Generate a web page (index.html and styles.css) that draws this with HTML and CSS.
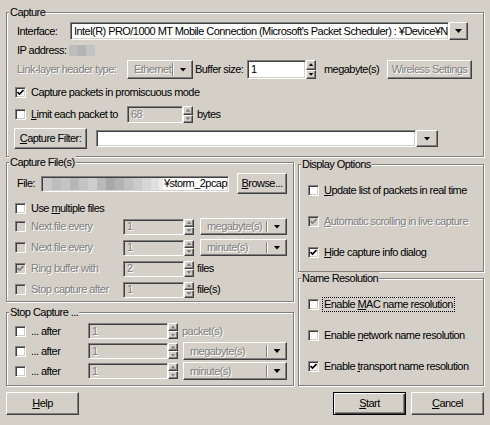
FILE: index.html
```html
<!DOCTYPE html>
<html>
<head>
<meta charset="utf-8">
<title>Capture Options</title>
<link rel="stylesheet" href="styles.css">
</head>
<body>
<div class="dialog">

  <div class="group g-capture">
    <span class="gtitle">Capture</span>
    <div class="row r-iface">
      <span class="lbl w-iface">Interface:</span>
      <div class="combo c-iface">
        <div class="field">Intel(R) PRO/1000 MT Mobile Connection (Microsoft's Packet Scheduler) : ¥Device¥NPF_{8E7B1F2A-5C3D-4A6B-9E1F-0D2C3B4A5E6F}</div>
        <div class="dbtn"><i class="arr"></i></div>
      </div>
    </div>
    <div class="row r-ip">
      <span class="lbl w-ip">IP address:</span><span class="ip-mosaic"></span>
    </div>
    <div class="row r-link">
      <span class="lbl dis w-link">Link-layer header type:</span>
      <div class="optmenu om-eth"><span class="omtext dis">Ethernet</span><span class="omsep"></span><span class="omarr"><i class="arr"></i></span></div>
      <span class="lbl w-buf">Buffer size:</span>
      <div class="spin sp-buf"><div class="field">1</div><div class="spbtns"><span class="spb"><i class="sarr up"></i></span><span class="spb"><i class="sarr dn"></i></span></div></div>
      <span class="lbl w-mb">megabyte(s)</span>
      <button class="btn b-wireless"><span class="dis">Wireless Settings</span></button>
    </div>
    <div class="row r-prom">
      <span class="cb"><svg viewBox="0 0 7 7"><path d="M0.5 3 L2.5 5 L6.5 1"/></svg></span><span class="lbl">Capture packets in promiscuous mode</span>
    </div>
    <div class="row r-limit">
      <span class="chk w-limit"><span class="cb"></span><span class="lbl"><u>L</u>imit each packet to</span></span>
      <div class="spin sp-limit"><div class="field dis">68</div><div class="spbtns dis"><span class="spb"><i class="sarr up"></i></span><span class="spb"><i class="sarr dn"></i></span></div></div>
      <span class="lbl u-bytes">bytes</span>
    </div>
    <div class="row r-filter">
      <button class="btn b-filter"><span><u>C</u>apture Filter:</span></button>
      <div class="combo c-filter">
        <div class="field"></div>
        <div class="dbtn"><i class="arr"></i></div>
      </div>
    </div>
  </div>

  <div class="mid">
    <div class="col">
      <div class="group g-files">
        <span class="gtitle">Capture File(s)</span>
        <div class="row r-file">
          <span class="lbl w-file">File:</span>
          <div class="field f-file"><span class="path-mosaic"></span><span class="path">¥storm_2pcap</span></div>
          <button class="btn b-browse"><span><u>B</u>rowse...</span></button>
        </div>
        <div class="row r-multi">
          <span class="cb"></span><span class="lbl">Use <u>m</u>ultiple files</span>
        </div>
        <div class="row r-opt">
          <span class="chk w-fchk"><span class="cb dis"></span><span class="lbl dis">Next file every</span></span>
          <div class="spin sp-f"><div class="field dis">1</div><div class="spbtns dis"><span class="spb"><i class="sarr up"></i></span><span class="spb"><i class="sarr dn"></i></span></div></div>
          <div class="optmenu om-f"><span class="omtext dis">megabyte(s)</span><span class="omsep"></span><span class="omarr"><i class="arr"></i></span></div>
        </div>
        <div class="row r-opt">
          <span class="chk w-fchk"><span class="cb dis"></span><span class="lbl dis">Next file every</span></span>
          <div class="spin sp-f"><div class="field dis">1</div><div class="spbtns dis"><span class="spb"><i class="sarr up"></i></span><span class="spb"><i class="sarr dn"></i></span></div></div>
          <div class="optmenu om-f"><span class="omtext dis">minute(s)</span><span class="omsep"></span><span class="omarr"><i class="arr"></i></span></div>
        </div>
        <div class="row r-opt">
          <span class="chk w-fchk"><span class="cb dis"><svg viewBox="0 0 7 7"><path d="M0.5 3 L2.5 5 L6.5 1"/></svg></span><span class="lbl dis">Ring buffer with</span></span>
          <div class="spin sp-f"><div class="field dis">2</div><div class="spbtns dis"><span class="spb"><i class="sarr up"></i></span><span class="spb"><i class="sarr dn"></i></span></div></div>
          <span class="lbl u-files">files</span>
        </div>
        <div class="row r-opt">
          <span class="chk w-fchk"><span class="cb dis"></span><span class="lbl dis">Stop capture after</span></span>
          <div class="spin sp-f"><div class="field dis">1</div><div class="spbtns dis"><span class="spb"><i class="sarr up"></i></span><span class="spb"><i class="sarr dn"></i></span></div></div>
          <span class="lbl u-files">file(s)</span>
        </div>
      </div>

      <div class="group g-stop">
        <span class="gtitle">Stop Capture ...</span>
        <div class="row r-stop">
          <span class="chk w-schk"><span class="cb"></span><span class="lbl">... after</span></span>
          <div class="spin sp-s"><div class="field dis">1</div><div class="spbtns dis"><span class="spb"><i class="sarr up"></i></span><span class="spb"><i class="sarr dn"></i></span></div></div>
          <span class="lbl dis u-pkt">packet(s)</span>
        </div>
        <div class="row r-stop">
          <span class="chk w-schk"><span class="cb"></span><span class="lbl">... after</span></span>
          <div class="spin sp-s"><div class="field dis">1</div><div class="spbtns dis"><span class="spb"><i class="sarr up"></i></span><span class="spb"><i class="sarr dn"></i></span></div></div>
          <div class="optmenu om-s"><span class="omtext dis">megabyte(s)</span><span class="omsep"></span><span class="omarr"><i class="arr"></i></span></div>
        </div>
        <div class="row r-stop">
          <span class="chk w-schk"><span class="cb"></span><span class="lbl">... after</span></span>
          <div class="spin sp-s"><div class="field dis">1</div><div class="spbtns dis"><span class="spb"><i class="sarr up"></i></span><span class="spb"><i class="sarr dn"></i></span></div></div>
          <div class="optmenu om-s"><span class="omtext dis">minute(s)</span><span class="omsep"></span><span class="omarr"><i class="arr"></i></span></div>
        </div>
      </div>
    </div>

    <div class="col">
      <div class="group g-disp">
        <span class="gtitle">Display Options</span>
        <div class="row r-chk">
          <span class="cb"></span><span class="lbl"><u>U</u>pdate list of packets in real time</span>
        </div>
        <div class="row r-chk">
          <span class="cb dis"><svg viewBox="0 0 7 7"><path d="M0.5 3 L2.5 5 L6.5 1"/></svg></span><span class="lbl dis"><u>A</u>utomatic scrolling in live capture</span>
        </div>
        <div class="row r-chk">
          <span class="cb"><svg viewBox="0 0 7 7"><path d="M0.5 3 L2.5 5 L6.5 1"/></svg></span><span class="lbl"><u>H</u>ide capture info dialog</span>
        </div>
      </div>

      <div class="group g-name">
        <span class="gtitle">Name Resolution</span>
        <div class="row r-chk">
          <span class="cb"></span><span class="lbl focus">Enable <u>M</u>AC name resolution</span>
        </div>
        <div class="row r-chk">
          <span class="cb"></span><span class="lbl">Enable <u>n</u>etwork name resolution</span>
        </div>
        <div class="row r-chk">
          <span class="cb"><svg viewBox="0 0 7 7"><path d="M0.5 3 L2.5 5 L6.5 1"/></svg></span><span class="lbl">Enable <u>t</u>ransport name resolution</span>
        </div>
      </div>
    </div>
  </div>

  <div class="r-btns">
    <button class="btn b-dlg"><span><u>H</u>elp</span></button>
    <button class="btn b-dlg b-start default"><span><u>S</u>tart</span></button>
    <button class="btn b-dlg b-cancel"><span><u>C</u>ancel</span></button>
  </div>

</div>
</body>
</html>
```

FILE: styles.css
```css
* { box-sizing: border-box; }
html, body { margin: 0; padding: 0; }
body {
  width: 490px;
  height: 425px;
  overflow: hidden;
  background: #d4d0c8;
  font-family: "Liberation Sans", Arial, sans-serif;
  font-size: 11px;
  letter-spacing: -0.55px;
  line-height: 13px;
  color: #000;
}
u { text-decoration: underline; }

.dialog { padding: 12px 6px 0 6px; width: 490px; }

/* group boxes */
.group {
  position: relative;
  border: 1px solid #808080;
  box-shadow: inset 1px 1px 0 #fff, 1px 1px 0 #fff;
}
.gtitle {
  position: absolute;
  top: -7px;
  left: 2px;
  padding: 0 1px;
  line-height: 12px;
  background: #d4d0c8;
  white-space: nowrap;
}

.row { display: flex; align-items: center; }
.lbl { white-space: nowrap; flex: none; }
.dis { color: #808080; text-shadow: 1px 1px 0 #fff; }

/* sunken field */
.field {
  background: #fff;
  border: 1px solid;
  border-color: #808080 #fff #fff #808080;
  box-shadow: inset 1px 1px 0 #404040, inset -1px -1px 0 #d4d0c8;
  padding: 0 2px 0 3px;
  display: flex;
  align-items: center;
  white-space: nowrap;
  overflow: hidden;
  height: 100%;
}
.field.dis { background: #d4d0c8; }

/* raised */
.btn, .dbtn, .optmenu, .spb {
  background: #d4d0c8;
  border: 1px solid;
  border-color: #fff #404040 #404040 #fff;
  box-shadow: inset -1px -1px 0 #808080;
}
.btn {
  font: inherit;
  letter-spacing: inherit;
  color: #000;
  margin: 0;
  padding: 0;
  display: flex;
  align-items: center;
  justify-content: center;
  white-space: nowrap;
  flex: none;
}
.btn.default {
  border: 1px solid #000;
  box-shadow: inset 1px 1px 0 #fff, inset -1px -1px 0 #404040, inset -2px -2px 0 #808080;
}

.combo { display: flex; flex: none; }
.combo .field { flex: 1; }
.dbtn { display: flex; align-items: center; justify-content: center; flex: none; }

.arr {
  display: block;
  width: 7px;
  height: 4px;
  background: #000;
  clip-path: polygon(0 0, 100% 0, 50% 100%);
}

.optmenu { display: flex; align-items: center; flex: none; }
.omtext { flex: 1; padding-left: 6px; white-space: nowrap; overflow: hidden; }
.omsep {
  width: 2px;
  align-self: stretch;
  margin: 2px 0;
  border-left: 1px solid #808080;
  border-right: 1px solid #fff;
  flex: none;
}
.omarr { width: 18px; display: flex; justify-content: center; align-items: center; flex: none; }

/* spin buttons */
.spin { display: flex; flex: none; }
.spin .field { flex: 1; }
.spbtns { width: 10px; display: flex; flex-direction: column; flex: none; }
.spb { flex: 1; display: flex; align-items: center; justify-content: center; }
.sarr { display: block; width: 5px; height: 3px; background: #000; }
.sarr.up { clip-path: polygon(50% 0, 100% 100%, 0 100%); }
.sarr.dn { clip-path: polygon(0 0, 100% 0, 50% 100%); }
.spbtns.dis .sarr { background: #808080; }

/* checkbox */
.cb {
  width: 11px;
  height: 11px;
  flex: none;
  margin: 0 5px 0 1px;
  background: #fff;
  border: 1px solid;
  border-color: #808080 #fff #fff #808080;
  box-shadow: inset 1px 1px 0 #404040, inset -1px -1px 0 #d4d0c8;
  display: flex;
  align-items: center;
  justify-content: center;
}
.cb svg { width: 7px; height: 7px; display: block; }
.cb path { fill: none; stroke: #000; stroke-width: 1.6; }
.cb.dis { background: #d4d0c8; text-shadow: none; }
.cb.dis path { stroke: #808080; }
.chk { display: flex; align-items: center; flex: none; }

/* capture group */
.g-capture { padding: 9px 7px 7px 7px; }
.r-iface { height: 18px; }
.w-iface { width: 56px; padding-left: 3px; }
.c-iface { width: 398px; height: 18px; }
.c-iface .dbtn { width: 19px; }
.r-ip { height: 11px; margin-top: 5px; }
.w-ip { width: 55px; padding-left: 3px; }
.ip-mosaic {
  width: 26px;
  height: 11px;
  background:
    linear-gradient(90deg, #bdbdbd 0 8px, #b4b4b4 8px 17px, #c3c3c3 17px 26px);
}
.r-link { height: 19px; margin-top: 4px; }
.w-link { width: 113px; padding-left: 3px; }
.om-eth { width: 66px; height: 19px; }
.w-buf { width: 54px; padding-left: 2px; }
.sp-buf { width: 69px; height: 19px; }
.w-mb { width: 71px; padding-left: 8px; }
.b-wireless { width: 85px; height: 19px; }
.r-prom { height: 13px; margin-top: 7px; }
.r-limit { height: 17px; margin-top: 7px; }
.w-limit { width: 113px; }
.sp-limit { width: 66px; height: 17px; }
.u-bytes { margin-left: 4px; }
.r-filter { height: 21px; margin-top: 5px; }
.b-filter { width: 73px; height: 21px; }
.c-filter { width: 342px; height: 17px; margin-left: 9px; }
.c-filter .dbtn { width: 22px; }

/* middle */
.mid {
  display: grid;
  grid-template-columns: 288px 186px;
  column-gap: 4px;
  align-items: start;
  margin-top: 5px;
}
.col { display: flex; flex-direction: column; }

.g-files { padding: 10px 7px 3px 7px; }
.r-file { height: 21px; }
.w-file { width: 27px; padding-left: 3px; }
.f-file { width: 188px; height: 16px; flex: none; padding: 0 1px 0 1px; }
.path-mosaic {
  flex: 1 1 auto;
  min-width: 0;
  height: 12px;
  background: linear-gradient(90deg,
    #c9c9c9 0 9px, #bdbdbd 9px 18px, #c5c5c5 18px 27px, #b7b7b7 27px 36px,
    #c4c4c4 36px 45px, #cdcdcd 45px 54px, #b9b9b9 54px 63px, #a8a8a8 63px 72px,
    #b3b3b3 72px 81px, #c0c0c0 81px 90px, #cbcbcb 90px 99px, #d6d6d6 99px 108px,
    #e0e0e0 108px 116px, #ececec 116px 124px);
}
.path { flex: none; padding-left: 1px; }
.b-browse { width: 50px; height: 21px; margin-left: 8px; }
.r-multi { height: 14px; margin-top: 7px; }
.r-opt { height: 17px; margin-top: 3px; }
.r-opt + .r-opt { margin-top: 4px; }
.w-fchk { width: 109px; }
.sp-f { width: 71px; height: 16px; }
.om-f { width: 87px; height: 17px; margin-left: 6px; }
.u-files { margin-left: 3px; }

.g-stop { margin-top: 10px; padding: 9px 7px 5px 7px; }
.r-stop { height: 18px; }
.r-stop + .r-stop { margin-top: 2px; }
.w-schk { width: 74px; }
.sp-s { width: 90px; height: 16px; }
.u-pkt { margin-left: 4px; }
.om-s { width: 104px; height: 18px; margin-left: 5px; }

.g-disp { margin-top: 2px; padding: 17px 8px 11px 8px; }
.g-name { margin-top: 6px; padding: 17px 8px 11px 8px; }
.r-chk { height: 16px; }
.r-chk + .r-chk { margin-top: 15px; }
.focus { border: 1px dotted #000; padding: 0 1px; margin-left: -2px; line-height: 13px; }

/* dialog buttons */
.r-btns { display: flex; height: 23px; margin-top: 6px; }
.b-dlg { width: 73px; height: 23px; }
.b-start { margin-left: auto; }
.b-cancel { margin-left: 5px; }
```
